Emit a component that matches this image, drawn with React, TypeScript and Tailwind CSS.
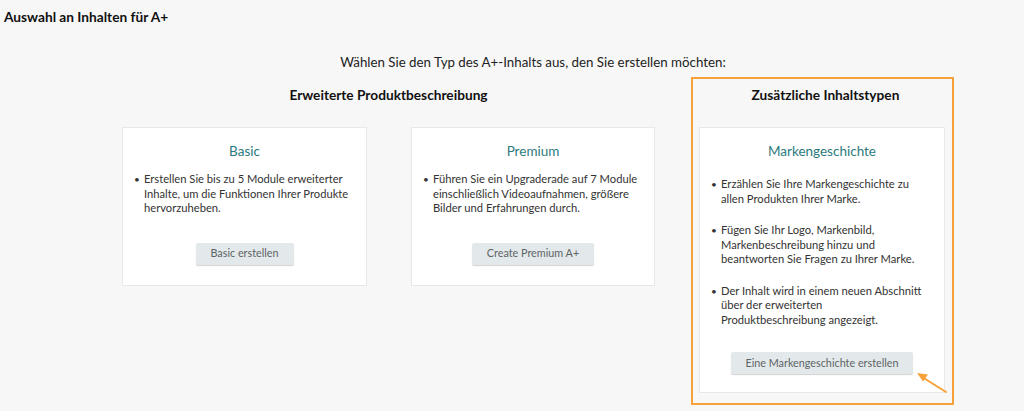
import React from "react";

const font = { fontFamily: "Lato, 'Noto Sans', sans-serif" };

function Bullets({ items }: { items: string[][] }) {
  return (
    <div className="flex flex-col gap-[17px]">
      {items.map((lines, i) => (
        <div key={i} className="flex">
          <span className="w-[10px] shrink-0 text-[10px] leading-[14.5px] text-[#333]">•</span>
          <div className="text-[11.2px] leading-[14.5px] text-[#333]">
            {lines.map((l, j) => (
              <div key={j} className="whitespace-nowrap">
                {l}
              </div>
            ))}
          </div>
        </div>
      ))}
    </div>
  );
}

function Btn({ children, w }: { children: React.ReactNode; w: string }) {
  return (
    <div className="flex justify-center">
      <button
        className={`${w} h-[22px] rounded-[2px] bg-[#e3e9ea] text-[10.8px] text-[#5d6466] shadow-[0_1px_1px_rgba(0,0,0,0.18)]`}
      >
        {children}
      </button>
    </div>
  );
}

function Card({
  title,
  items,
  btn,
  btnW,
  w,
  h,
  listMt,
  btnMt,
}: {
  title: string;
  items: string[][];
  btn: string;
  btnW: string;
  w: string;
  h: string;
  listMt: string;
  btnMt: string;
}) {
  return (
    <div className={`${w} ${h} border border-[#e8e8e8] bg-white`}>
      <div className="pt-[13px] text-center text-[13.5px] leading-[20px] text-[#2c7a7d]">{title}</div>
      <div className={`${listMt} pl-[11px]`}>
        <Bullets items={items} />
      </div>
      <div className={btnMt}>
        <Btn w={btnW}>{btn}</Btn>
      </div>
    </div>
  );
}

export default function App() {
  return (
    <div className="relative h-[411px] w-full overflow-hidden bg-[#f7f7f7] text-[#111]" style={font}>
      <div className="pl-[4px] pt-[9px] text-[13.7px] font-bold leading-[16px]">Auswahl an Inhalten für A+</div>
      <div className="ml-[122px] w-[832px]">
        <div className="mt-[29px] pr-[10px] text-center text-[13.3px] leading-[16px] text-[#222]">
          Wählen Sie den Typ des A+-Inhalts aus, den Sie erstellen möchten:
        </div>
        <div className="mt-[7px] flex items-start">
          <div className="w-[533px]">
            <div className="pt-[10px] text-center text-[13.7px] font-bold leading-[16px]">Erweiterte Produktbeschreibung</div>
            <div className="mt-[24px] flex gap-[44px]">
              <Card
                title="Basic"
                w="w-[245px]"
                h="h-[159px]"
                listMt="mt-[11px]"
                btnMt="mt-[27px]"
                btnW="w-[98px]"
                btn="Basic erstellen"
                items={[["Erstellen Sie bis zu 5 Module erweiterter", "Inhalte, um die Funktionen Ihrer Produkte", "hervorzuheben."]]}
              />
              <Card
                title="Premium"
                w="w-[244px]"
                h="h-[159px]"
                listMt="mt-[11px]"
                btnMt="mt-[27px]"
                btnW="w-[122px]"
                btn="Create Premium A+"
                items={[["Führen Sie ein Upgraderade auf 7 Module", "einschließlich Videoaufnahmen, größere", "Bilder und Erfahrungen durch."]]}
              />
            </div>
          </div>
          <div className="ml-[36px] h-[328px] w-[263px] border-2 border-[#f7a13a] pl-[6px]">
            <div className="pt-[8px] text-center text-[13.7px] font-bold leading-[16px]">Zusätzliche Inhaltstypen</div>
            <div className="mt-[24px]">
              <Card
                title="Markengeschichte"
                w="w-[246px]"
                h="h-[266px]"
                listMt="mt-[16px]"
                btnMt="mt-[25px]"
                btnW="w-[182px]"
                btn="Eine Markengeschichte erstellen"
                items={[
                  ["Erzählen Sie Ihre Markengeschichte zu", "allen Produkten Ihrer Marke."],
                  ["Fügen Sie Ihr Logo, Markenbild,", "Markenbeschreibung hinzu und", "beantworten Sie Fragen zu Ihrer Marke."],
                  ["Der Inhalt wird in einem neuen Abschnitt", "über der erweiterten", "Produktbeschreibung angezeigt."],
                ]}
              />
            </div>
          </div>
        </div>
      </div>
      <svg className="absolute left-[912px] top-[367px]" width="40" height="30" viewBox="0 0 40 30">
        <line x1="34" y1="25" x2="10" y2="10" stroke="#f7a13a" strokeWidth="2" strokeLinecap="round" />
        <polygon points="5,6 16,7.5 11,14.5" fill="#f7a13a" />
      </svg>
    </div>
  );
}
